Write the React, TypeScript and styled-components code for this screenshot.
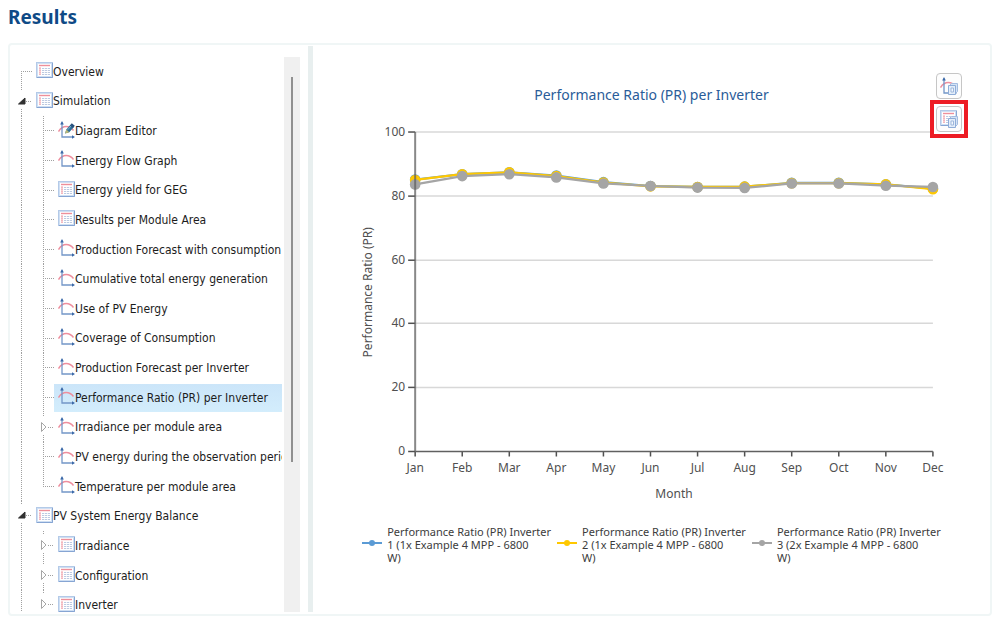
import React, { useState } from "react";
import styled, { createGlobalStyle } from "styled-components";

const GlobalStyle = createGlobalStyle`
  *, *::before, *::after { box-sizing: border-box; }
  body {
    margin: 0;
    background: #fff;
    color: #1c1c1c;
    font-family: "Noto Sans", Tahoma, sans-serif;
    font-size: 12px;
  }
`;

const Page = styled.div`
  display: flex;
  flex-direction: column;
  height: 100vh;
  padding: 4px 8px 8px;
`;

const Heading = styled.h1`
  margin: 0 0 13px;
  color: #0f4a86;
  font-size: 19px;
  line-height: 26px;
  font-weight: 700;
`;

const Panel = styled.main`
  display: flex;
  flex: 1;
  min-height: 0;
  border: 2px solid #f0f6f6;
  border-radius: 4px;
`;

const Sidebar = styled.nav`
  display: flex;
  flex: 0 0 298px;
  padding: 12px 8px 2px 4px;
`;

const TreeView = styled.div`
  flex: 1;
  min-width: 0;
  overflow: hidden;
`;

const Tree = styled.ul`
  display: grid;
  grid-auto-rows: 1fr;
  height: 563px;
  margin: 0;
  padding: 0;
  list-style: none;
  font-family: "DejaVu Sans Condensed", Tahoma, sans-serif;
`;

const Row = styled.li`
  display: flex;
  min-height: 0;
  min-width: 0;
`;

type Line = "none" | "through" | "start" | "end" | "gap";

const vertical: Record<Line, string> = {
  none: "transparent, transparent",
  through: "#a0a0a0, #a0a0a0",
  start: "transparent 14px, #a0a0a0 14px",
  end: "#a0a0a0 14px, transparent 14px",
  gap: "#a0a0a0 4px, transparent 4px, transparent 22px, #a0a0a0 22px",
};

const Guide = styled.span<{ $line: Line }>`
  display: flex;
  flex: 0 0 22px;
  background:
    repeating-linear-gradient(transparent 0 1px, #fff 1px 2px) 7px 0 / 1px 100% no-repeat,
    linear-gradient(${(p) => vertical[p.$line]}) 7px 0 / 1px 100% no-repeat;
`;

const Branch = styled(Guide)<{ $short?: boolean }>`
  flex-basis: 18px;
  background:
    repeating-linear-gradient(transparent 0 1px, #fff 1px 2px) 7px 0 / 1px 100% no-repeat,
    linear-gradient(${(p) => vertical[p.$line]}) 7px 0 / 1px 100% no-repeat,
    repeating-linear-gradient(90deg, #a0a0a0 0 1px, transparent 1px 2px)
      ${(p) => (p.$short ? "12px" : "7px")} 14px / 11px 1px no-repeat;
`;

const Expander = styled.button`
  display: flex;
  align-items: center;
  width: 14px;
  height: 28px;
  padding: 0 0 0 4px;
  border: 0;
  background: none;
`;

const Item = styled.button<{ $selected?: boolean }>`
  display: flex;
  flex: 1;
  align-items: center;
  min-width: 0;
  margin: 1px 0;
  padding: 0 0 0 4px;
  border: 0;
  overflow: hidden;
  background: ${(p) => (p.$selected ? "linear-gradient(#cbe5f9, #d3edfc)" : "none")};
  color: inherit;
  font: inherit;
  text-align: left;
  white-space: nowrap;

  svg {
    flex: none;
    margin-bottom: 3px;
  }
`;

const Scrollbar = styled.div`
  display: flex;
  justify-content: center;
  flex: 0 0 16px;
  margin-left: 2px;
  padding-top: 20px;
  background: #f0f0f0;
`;

const Thumb = styled.div`
  width: 2px;
  height: 72%;
  background: #909090;
`;

const Splitter = styled.div`
  flex: 0 0 5px;
  margin: 1px 0 2px;
  background: #e8efef;
`;

const ChartPane = styled.section`
  position: relative;
  flex: 1;
  min-width: 0;
  padding-top: 40px;
`;

const ChartTitle = styled.h2`
  margin: 0;
  color: #2a5c99;
  font-size: 14px;
  line-height: 20px;
  font-weight: 400;
  text-align: center;
`;

const Plot = styled.svg`
  display: block;
  width: 100%;
  margin-top: 10px;
  font-size: 12px;
  fill: #505050;
`;

const Legend = styled.ul`
  display: flex;
  justify-content: center;
  gap: 6px;
  margin: 0;
  padding: 13px 0 0;
  list-style: none;
  color: #3c3c3c;
  font-size: 11px;
  line-height: 13px;
`;

const LegendItem = styled.li`
  display: flex;
  align-items: center;
  gap: 5px;
  flex: 0 0 188px;
  white-space: nowrap;

  svg {
    flex: none;
    margin-bottom: 2px;
  }
`;

const LegendLine = styled.span`
  display: block;
`;

const Tools = styled.div`
  position: absolute;
  top: 28px;
  right: 22px;
  display: flex;
  flex-direction: column;
  align-items: center;
  gap: 1px;
`;

const ToolButton = styled.button`
  display: flex;
  align-items: center;
  justify-content: center;
  width: 26px;
  height: 26px;
  padding: 0;
  border: 1px solid #c6c6c6;
  border-radius: 4px;
  background: #fdfdfd;
`;

const Highlight = styled.div`
  padding: 2px;
  border: 4px solid #ed1c24;
`;

const TableShape = () => (
  <>
    <rect x="0.5" y="0.5" width="16" height="15" fill="#cfdff3" stroke="#b4cae8" />
    <path d="M16.5 1v14.5H1" fill="none" stroke="#86a5d3" />
    <rect x="2" y="2" width="13" height="12" fill="#fff" />
    <path d="M3 3.5h11" stroke="#ee8f9a" strokeWidth="1.4" />
    <path d="M4 5.500v8" stroke="#f0a0a9" strokeWidth="2" strokeDasharray="1.200 .8" />
    <path d="M6 6.500h8M6 8.500h8M6 10.500h8M6 12.500h8" stroke="#bccae2" strokeDasharray="2.200 .7" />
  </>
);

const GraphShape = () => (
  <>
    <path d="M.5 10.500C2.500 7.500 5 5.600 8.200 5.600c3 0 5.300 1.400 7.300 3.900" fill="none" stroke="#ee8e9d" strokeWidth="1.500" />
    <path d="M4 1.500v14.500H15" fill="none" stroke="#7396c8" strokeWidth="1.300" />
    <path d="M4 0l1.800 3.500H2.200zM17 16l-3-1.700v3.400z" fill="#3a68a8" />
  </>
);

const TableIcon = () => (
  <svg width="17" height="16" viewBox="0 0 17 16" aria-hidden="true">
    <TableShape />
  </svg>
);

const GraphIcon = ({ edit = false }: { edit?: boolean }) => (
  <svg width="17" height="18" viewBox="0 0 17 18" aria-hidden="true">
    <GraphShape />
    {edit && (
      <>
        <path d="M7 12.500l1.300-4 4.200-4.800 3.200 2.600-4.400 5z" fill="#2f6f99" />
        <path d="M7 12.500l1.300-4 3 2.800z" fill="#b9b878" />
        <path d="M11.800 4.500l2-2.200 3 2.500-1.800 2.200z" fill="#27507d" />
        <path d="M9.700 8.800l3.400-3.900" stroke="#79b4cc" />
      </>
    )}
  </svg>
);

const CopyShape = () => (
  <>
    <path d="M9.500 8.500l2-2h6v8l-2 2" fill="#d5e3f5" stroke="#a3bce0" strokeLinejoin="round" />
    <path d="M8.500 8.500h7v9h-7z" fill="#e3edf9" stroke="#8fadd8" strokeLinejoin="round" />
    <path d="M11 11h2.500v4H11z" fill="#f4f8fd" stroke="#9db7dc" />
  </>
);

const CopyGraphIcon = () => (
  <svg width="18" height="18" viewBox="0 0 18 18" aria-hidden="true">
    <GraphShape />
    <CopyShape />
  </svg>
);

const CopyTableIcon = () => (
  <svg width="18" height="18" viewBox="0 0 18 18" aria-hidden="true">
    <TableShape />
    <CopyShape />
  </svg>
);

const Arrow = ({ open }: { open: boolean }) => (
  <svg width="8" height="12" viewBox="0 0 8 12" aria-hidden="true">
    {open ? (
      <path d="M7 3v6H.5z" fill="#303030" stroke="#303030" strokeLinejoin="round" />
    ) : (
      <path d="M1.500 1.500L6 6l-4.500 4.500z" fill="#fff" stroke="#a6a6a6" />
    )}
  </svg>
);

interface Node {
  label: string;
  level: 0 | 1;
  icon: "table" | "graph" | "edit";
  line: Line;
  open?: boolean;
}

const nodes: Node[] = [
  { label: "Overview", level: 0, icon: "table", line: "start" },
  { label: "Simulation", level: 0, icon: "table", line: "gap", open: true },
  { label: "Diagram Editor", level: 1, icon: "edit", line: "through" },
  { label: "Energy Flow Graph", level: 1, icon: "graph", line: "through" },
  { label: "Energy yield for GEG", level: 1, icon: "table", line: "through" },
  { label: "Results per Module Area", level: 1, icon: "table", line: "through" },
  { label: "Production Forecast with consumption", level: 1, icon: "graph", line: "through" },
  { label: "Cumulative total energy generation", level: 1, icon: "graph", line: "through" },
  { label: "Use of PV Energy", level: 1, icon: "graph", line: "through" },
  { label: "Coverage of Consumption", level: 1, icon: "graph", line: "through" },
  { label: "Production Forecast per Inverter", level: 1, icon: "graph", line: "through" },
  { label: "Performance Ratio (PR) per Inverter", level: 1, icon: "graph", line: "through" },
  { label: "Irradiance per module area", level: 1, icon: "graph", line: "gap", open: false },
  { label: "PV energy during the observation period", level: 1, icon: "graph", line: "through" },
  { label: "Temperature per module area", level: 1, icon: "graph", line: "end" },
  { label: "PV System Energy Balance", level: 0, icon: "table", line: "gap", open: true },
  { label: "Irradiance", level: 1, icon: "table", line: "gap", open: false },
  { label: "Configuration", level: 1, icon: "table", line: "gap", open: false },
  { label: "Inverter", level: 1, icon: "table", line: "gap", open: false },
];

const months = ["Jan", "Feb", "Mar", "Apr", "May", "Jun", "Jul", "Aug", "Sep", "Oct", "Nov", "Dec"];

const series = [
  {
    color: "#5b9bd5",
    lines: ["Performance Ratio (PR) Inverter", "1 (1x Example 4 MPP - 6800", "W)"],
    values: [85.1, 86.8, 87.4, 86.4, 84.3, 83.1, 82.8, 82.9, 84.1, 84.1, 83.6, 82.3],
  },
  {
    color: "#ffc800",
    lines: ["Performance Ratio (PR) Inverter", "2 (1x Example 4 MPP - 6800", "W)"],
    values: [85.0, 86.8, 87.4, 86.2, 84.2, 83.0, 82.8, 82.9, 84.0, 84.0, 83.6, 82.1],
  },
  {
    color: "#a5a5a5",
    lines: ["Performance Ratio (PR) Inverter", "3 (2x Example 4 MPP - 6800", "W)"],
    values: [83.6, 86.2, 86.8, 85.8, 83.9, 83.1, 82.6, 82.5, 83.9, 83.9, 83.2, 82.8],
  },
];

const left = 102;
const right = 619;
const top = 17;
const bottom = 336;
const px = (i: number) => left + ((right - left) * i) / 11;
const py = (v: number) => bottom - ((bottom - top) * v) / 100;

const Chart = () => (
  <Plot viewBox="0 0 676 396" role="img" aria-label="Performance Ratio (PR) per Inverter">
    {[0, 20, 40, 60, 80, 100].map((v) => {
      const y = Math.round(py(v));
      return (
        <g key={v}>
          {v > 0 && <path d={`M${left} ${y}H${right}`} stroke="#d8d8d8" strokeWidth="1.500" />}
          <path d={`M${left - 7} ${y}h7`} stroke="#505050" strokeWidth="1.500" />
          <text x={left - 10} y={y + 4} textAnchor="end">{v}</text>
        </g>
      );
    })}
    {months.map((m, i) => (
      <g key={m}>
        <path d={`M${px(i)} ${bottom}v5`} stroke="#505050" strokeWidth="1.500" />
        <text x={px(i)} y={bottom + 20} textAnchor="middle">{m}</text>
      </g>
    ))}
    <path d={`M${left} ${bottom}H${right}`} stroke="#606060" strokeWidth="1.500" />
    {series.map((s) => (
      <g key={s.color} fill={s.color}>
        <polyline
          points={s.values.map((v, i) => `${px(i)},${py(v)}`).join(" ")}
          fill="none"
          stroke={s.color}
          strokeWidth="2.200"
        />
        {s.values.map((v, i) => (
          <circle key={i} cx={px(i)} cy={py(v)} r="5.300" />
        ))}
      </g>
    ))}
    <path d={`M${left} ${top}V${bottom}`} stroke="#606060" strokeOpacity="0.750" strokeWidth="2" />
    <text transform="translate(59 177) rotate(-90)" textAnchor="middle">Performance Ratio (PR)</text>
    <text x={(left + right) / 2} y={bottom + 46} textAnchor="middle">Month</text>
  </Plot>
);

export default function App() {
  const [selected, setSelected] = useState("Performance Ratio (PR) per Inverter");

  return (
    <Page>
      <GlobalStyle />
      <Heading>Results</Heading>
      <Panel>
        <Sidebar aria-label="Results">
          <TreeView>
            <Tree>
              {nodes.map((n) => (
                <Row key={n.label}>
                  {n.level === 1 && <Guide $line="through" />}
                  <Branch $line={n.line} $short={n.open !== undefined}>
                    {n.open !== undefined && (
                      <Expander aria-label={`Toggle ${n.label}`} aria-expanded={n.open}>
                        <Arrow open={n.open} />
                      </Expander>
                    )}
                  </Branch>
                  <Item $selected={n.label === selected} onClick={() => setSelected(n.label)}>
                    {n.icon === "table" ? <TableIcon /> : <GraphIcon edit={n.icon === "edit"} />}
                    {n.label}
                  </Item>
                </Row>
              ))}
            </Tree>
          </TreeView>
          <Scrollbar>
            <Thumb />
          </Scrollbar>
        </Sidebar>
        <Splitter />
        <ChartPane>
          <ChartTitle>Performance Ratio (PR) per Inverter</ChartTitle>
          <Chart />
          <Legend>
            {series.map((s) => (
              <LegendItem key={s.color}>
                <svg width="20" height="8" viewBox="0 0 20 8" aria-hidden="true">
                  <path d="M0 4h20" stroke={s.color} strokeWidth="2" />
                  <circle cx="10" cy="4" r="3" fill={s.color} />
                </svg>
                <span>
                  {s.lines.map((l) => (
                    <LegendLine key={l}>{l}</LegendLine>
                  ))}
                </span>
              </LegendItem>
            ))}
          </Legend>
          <Tools>
            <ToolButton aria-label="Copy diagram">
              <CopyGraphIcon />
            </ToolButton>
            <Highlight>
              <ToolButton aria-label="Copy table">
                <CopyTableIcon />
              </ToolButton>
            </Highlight>
          </Tools>
        </ChartPane>
      </Panel>
    </Page>
  );
}
